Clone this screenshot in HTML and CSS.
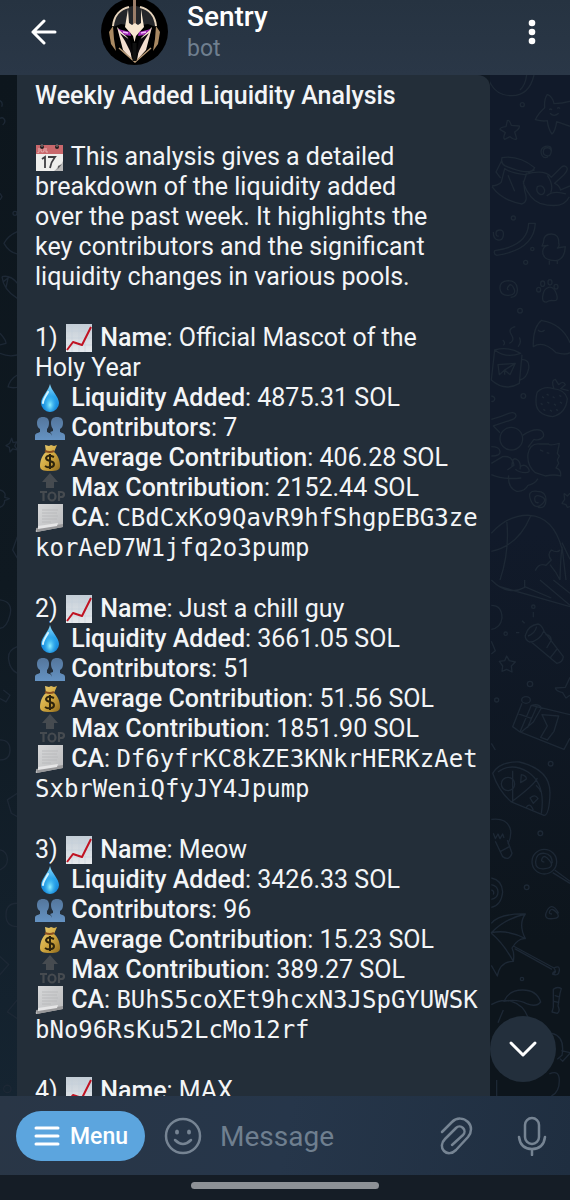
FILE: index.html
```html
<!DOCTYPE html>
<html lang="en">
<head>
    <meta charset="UTF-8">
    <meta name="viewport" content="width=device-width, initial-scale=1.0">
    <title>Sentry</title>
    <link rel="stylesheet" href="styles.css">
</head>
<body>
    <!-- Emoji shapes, reused in the message -->
    <svg class="defs" aria-hidden="true">
        <defs>
            <linearGradient id="dropFill" x1="0" y1="0" x2="0" y2="1">
                <stop offset="0" stop-color="#8fdcff"/>
                <stop offset="0.45" stop-color="#2ba4ea"/>
                <stop offset="1" stop-color="#0f7fd6"/>
            </linearGradient>
            <radialGradient id="dropGlow" cx="0.5" cy="0.75" r="0.4">
                <stop offset="0" stop-color="#8ff0ff"/>
                <stop offset="1" stop-color="#2bb0f0" stop-opacity="0"/>
            </radialGradient>
            <linearGradient id="peopleFill" x1="0" y1="0" x2="0" y2="1">
                <stop offset="0" stop-color="#54769c"/>
                <stop offset="1" stop-color="#6593c3"/>
            </linearGradient>
            <linearGradient id="bagFill" x1="0" y1="0" x2="1" y2="1">
                <stop offset="0" stop-color="#ecd27a"/>
                <stop offset="0.5" stop-color="#d3aa42"/>
                <stop offset="1" stop-color="#8f6a1c"/>
            </linearGradient>
            <linearGradient id="paperFill" x1="0" y1="0" x2="1" y2="1">
                <stop offset="0" stop-color="#d9dadb"/>
                <stop offset="1" stop-color="#b9babc"/>
            </linearGradient>
            <linearGradient id="chartFill" x1="0" y1="0" x2="0" y2="1">
                <stop offset="0" stop-color="#c3cdd6"/>
                <stop offset="1" stop-color="#e6e9ec"/>
            </linearGradient>
        </defs>
        <symbol id="calendar" viewBox="0 0 30 30">
            <path d="M1 4h27v25H1z" fill="#eeeeec"/>
            <path d="M1 3h27v9H1z" fill="#c9686c"/>
            <path d="M4 6v4q0 1-1.500 .5M6 6v3q0 1 1.500 1T9 9V6M11 6v4h2" fill="none" stroke="#e9b5b6" stroke-width="1"/>
            <circle cx="7" cy="5" r="2" fill="#241f22"/>
            <circle cx="22" cy="5" r="2" fill="#241f22"/>
            <path d="M7 5V2M22 5V2" stroke="#8b8787" stroke-width="1"/>
            <path d="M7 17l3-2v11M13 15h7q-4 5-5 11" fill="none" stroke="#3e3e42" stroke-width="1.800"/>
            <path d="M28 19q-1 4-5 5-1 3-4 5h9z" fill="#b9b9b9"/>
            <path d="M28 19q-1 4-5 5 1 3-4 5 6-2 9-10z" fill="#5a5a5c"/>
        </symbol>
        <symbol id="chart" viewBox="0 0 30 30">
            <path d="M2 1h26v28H2z" fill="url(#chartFill)"/>
            <path d="M8 1v28M15 1v28M21 1v28M2 8h26M2 15h26M2 22h26" stroke="#c3ced8" stroke-width=".5"/>
            <path d="M3 27l6-8 9 3 9-18" fill="none" stroke="#c01322" stroke-width="2" stroke-linejoin="round"/>
        </symbol>
        <symbol id="drop" viewBox="0 0 30 30">
            <path d="M15 1c1 6 9 13 9 19a9 9 0 0 1-18 0C6 14 14 7 15 1z" fill="url(#dropFill)"/>
            <path d="M15 1c1 6 9 13 9 19a9 9 0 0 1-18 0C6 14 14 7 15 1z" fill="url(#dropGlow)"/>
            <path d="M13 9c-2 4-5 7-5 11" fill="none" stroke="#d3f4ff" stroke-width="2" stroke-linecap="round"/>
        </symbol>
        <symbol id="people" viewBox="0 0 30 30">
            <g fill="url(#peopleFill)">
                <path d="M8 4c4 0 6 2 6 6 0 3-1 5-2 6v3c2 1 5 1 5 4v4H0v-4c0-3 3-3 5-4v-3c-2-1-3-3-3-6 0-4 2-6 6-6z"/>
                <path d="M22 4c4 0 6 2 6 6 0 3-1 5-3 6v3c2 1 5 1 5 4v4H17v-4c0-2-1-3-2-4l3-1v-2c-1-1-2-3-2-6 0-4 2-6 6-6z"/>
            </g>
        </symbol>
        <symbol id="bag" viewBox="0 0 30 30">
            <path d="M10 2l4 1 2-1 3 1 3-1-3 7c4 3 6 9 6 14 0 4-3 5-10 5S5 27 5 23c0-5 2-11 6-14z" fill="url(#bagFill)"/>
            <path d="M10 8q5 2 9 0" fill="none" stroke="#8a4f20" stroke-width="2"/>
            <path d="M19 14q-7-3-8 1c0 4 8 2 8 6 0 4-6 4-9 2M15 11v15" fill="none" stroke="#2d240d" stroke-width="2"/>
        </symbol>
        <symbol id="top" viewBox="0 0 30 30">
            <path d="M15 0l8 9h-4v6h-8V9H7z" fill="#464b50"/>
            <path d="M5 19h7M8.500 19v9M24 28v-9h2q3 0 3 2.500T26 24h-2" fill="none" stroke="#464b50" stroke-width="2.200"/>
            <ellipse cx="17" cy="23.500" rx="3.500" ry="4" fill="none" stroke="#464b50" stroke-width="2.200"/>
        </symbol>
        <symbol id="page" viewBox="0 0 30 30">
            <path d="M3 1h25v23L1 29q-1-3 2-4z" fill="url(#paperFill)"/>
            <path d="M7 7h16M7 10h15M7 13h16M7 16h15M7 19h9" stroke="#b9babc" stroke-width="1"/>
            <path d="M1 25l27-4v3L2 29z" fill="#99999b"/>
            <path d="M3 23l20-3-1 3-19 3z" fill="#e5e5e6"/>
        </symbol>
    </svg>

    <header class="header">
        <button class="icon-button back" aria-label="Back">
            <svg width="28" height="26" viewBox="0 0 28 26" fill="none" stroke="#fff" stroke-width="3" stroke-linecap="round" stroke-linejoin="round">
                <path d="M25 13H3M14 2L3 13l11 11"/>
            </svg>
        </button>
        <svg class="avatar" viewBox="0 0 67 67" role="img" aria-label="Sentry avatar">
            <circle cx="33.500" cy="33.500" r="33.500" fill="#000"/>
            <path d="M12 29C12 15 20 10 32 8v20L20 26zM55 29C55 15 47 10 35 8v20l12-2z" fill="#24262a"/>
            <path d="M12 28c1-10 7-17 16-19M55 28c-1-10-7-17-16-19" fill="none" stroke="#e6d3bb" stroke-width="2"/>
            <path d="M33.500 2v25" stroke="#9a7d69" stroke-width="3"/>
            <path d="M27 11l-3 18 8 9 1.500 6 1.500-6 8-9-3-18 0 14-3 2-3-2-3 2-3-2z" fill="#f7e6d0"/>
            <path d="M16 29l11 11 4 22-9-10zM51 29L40 40l-4 22 9-10z" fill="#f4dfd0"/>
            <path d="M19 35l10 7 3 17-8-16zM48 35l-10 7-3 17 8-16z" fill="#0b090c"/>
            <path d="M17 31l12 3 1 4-6-1zM50 31l-12 3-1 4 6-1z" fill="#a02ab5"/>
            <path d="M22 34l5 1M45 34l-5 1" stroke="#f4b9ff" stroke-width="1.500"/>
            <path d="M12 28l-4 6 2 12 5 7-2-12zM55 28l4 6-2 12-5 7 2-12z" fill="#a98962"/>
            <path d="M18 50l16 14 16-14" fill="none" stroke="#b89a76" stroke-width="1.500"/>
            <path d="M33.500 45v18" stroke="#111" stroke-width="4"/>
        </svg>
        <div class="peer">
            <h1>Sentry</h1>
            <p>bot</p>
        </div>
        <button class="icon-button more" aria-label="More options">
            <svg width="8" height="28" viewBox="0 0 8 28" fill="#fff">
                <circle cx="4" cy="5" r="3.300"/>
                <circle cx="4" cy="14" r="3.300"/>
                <circle cx="4" cy="23" r="3.300"/>
            </svg>
        </button>
    </header>

    <main class="chat">
        <!-- Wallpaper doodles -->
        <svg class="wallpaper left" viewBox="0 75 17 1021" preserveAspectRatio="xMinYMin slice" aria-hidden="true">
            <g transform="translate(0 60) scale(.3333)">
                <path d="M0 122q10 6 5 18M0 175q8-5 13 3t-5 17M0 400l6 10-6 10M52 515q-28 12-40 35 14 26 40 32"/>
                <circle cx="45" cy="460" r="6"/>
                <path d="M6 650q26-6 46 20M6 650q4 40 46 65M10 665l18-14M24 655l-6 28M0 820q18 20 18 30l-18 5M0 880q26 12 52 5M52 945q-22 12-28 36 14 4 28 1M35 1135l4 13 11-2-6 12 8 12-14-3-8 9-2-14-10-5 11-7zM0 1290q20 6 14 22l14 4-14 6q0 16-14 20M52 1430l-14 40 14 25"/>
                <path d="M0 1620q40 5 30 45T0 1705M52 1760q-30 10-26 40t26 40M10 1890l20 16-12 20-18-10M0 2040q30 0 30 30t-30 30M52 2200l-30 20 12 40 18 10M0 2370q20 4 22 26T0 2430M52 2530q-34 0-34 35t34 35M0 2690l26 24-26 30M52 2820l-30 36 30 20"/>
                <circle cx="22" cy="3087" r="11"/>
            </g>
        </svg>
        <svg class="wallpaper right" viewBox="490 75 80 1021" preserveAspectRatio="xMaxYMin slice" aria-hidden="true">
            <g transform="translate(480 60) scale(.3333)">
                <!-- stars, sleeping cat, scarf, duckling, paw -->
                <path d="M22 45q15 60 70 62t70-62M120 90q16-14 20-45"/>
                <circle cx="127" cy="134" r="6"/>
                <path d="M202 103q16 6 20 28 26 0 50-8M202 103q-10 14-8 40-20 18-28 36 22 6 36 3 2 24 14 40 10-8 14-37l40 14M208 150q3-6 8 0M232 146q3-6 8 0M210 160q12 12 26 0"/>
                <path d="M82 182q6-4 12 14l24 2q2 8-14 18l6 20q-6 6-20-6l-16 8q-6-4 2-20l-16-10q0-6 18-8z"/>
                <path d="M214 275a12 12 0 1 0-14 12q12 4 14-14t-18-14q-16 6-12 22t20 10M66 293q50-8 98 30-6 14-30 12t-60-18q-12-8-8-24zM66 300l-18 36q8 12 14 18M164 330l-20 8M36 378q20-2 28-12l10-40q20 14 60 18 60-18 80 8l30-30q10-8 16 0t-8 22l-28 26q14 6 18 20l28-12M36 380q30 42 90 52 20-6 8-40l-4-30M84 346l20 48M140 340l-10 30q20 50 50 60 70 20 88-20M202 346q20 30 10 52M172 380q16-8 22 10 0 14-12 14-16-8-10-24zM200 408q20-18 58-6"/>
                <circle cx="100" cy="474" r="6"/>
                <path d="M56 528q-8 2-8-8t12-10 10 16-16 14-14-24M146 490h20q-4 80-116 96-10-4-6-14 100-14 102-82z"/>
                <path d="M190 548q0-26 24-26t22 28q4 8-4 14l24-4q-2 40-30 42-38 0-38-28 2-16 16-18l-18 2zM208 602v12M232 602v10"/>
                <circle cx="157" cy="567" r="5"/><circle cx="137" cy="607" r="6"/>
                <path d="M86 690q-8-2 0-12t16 8-16 20-26-20 24-24q26 0 28 24t-20 26M188 710q2-24 18-28t24 22q6 20-10 18-12-2-20 4-14 2-12-16z"/>
                <ellipse cx="176" cy="689" rx="6" ry="7"/><ellipse cx="188" cy="671" rx="6" ry="8"/><ellipse cx="210" cy="667" rx="6" ry="8"/><ellipse cx="228" cy="680" rx="6" ry="7"/>
                <circle cx="120" cy="752" r="7"/>
            </g>
            <g transform="translate(480 320) scale(.3333)">
                <!-- mug, strawberry, cats, parachute -->
                <path d="M44 90q40-12 78 10-44 16-78-10zM44 90l-10 90q40 36 84 10l8-86M124 118q26 0 22 28-6 30-26 34M54 134l52-4-16 34-16-14-16 14zM106 130l-32 20v14M70 76q8-8-2-16M88 70q18-8 6-26t12-24M114 80q12-12 4-28M186 0q-28 20-26 80 30-20 68 18 30 8 42 0M186 2q60 10 84 66M174 30q10 10 20 0"/>
                <circle cx="130" cy="228" r="7"/><path d="M34 228q12 2 10 10t-10 6"/>
                <path d="M172 216q20-20 48-10 36 4 42 30-4 44-44 54-50-6-50-44 0-20 4-30zM222 206q-10-26 4-28l10 16q14-14 20 0l-14 12 24 6M186 230l6 4M200 222l6 4M218 230l6 4M238 226l6 4M182 250l6 4M202 246l6 4M222 252l6 4M240 246l6 4M190 268l6 4M210 270l6 4M228 268l6 4"/>
                <circle cx="94" cy="356" r="34"/>
                <path d="M34 298q30-8 52-18 20-6 22 6t-28 18l-40 14 20 20M128 346q30-20 50-16 16 6 12 20-10 14-28 8l-18 24M34 380q24 0 26 14t-26 14M34 430l34-20q30-4 34 26l-20 14M96 440q0-30 14-22t10 30M120 440q14-10 24 4t-8 14-30-10M180 372q-30-4-36 30-4 34 22 56l30 10q26-6 46 0 2-20-14-24l8-14-4-10 6-12-6-8 6-30q-30 8-32 2zM86 466q-4 36 24 48 24 2 34-18 20-4 30-20M34 464q34 16 90 10M180 390l10 4M200 398l8 2"/>
                <path d="M176 548q-12 2-12-12t20-6 0 24-32-14 20-26q26 0 26 26t-24 22M252 520l10 8 8-8M252 520l2 18-8 12 12 4 4 8 8-2M34 640q50-56 114-54 72 4 98 100-4 20-6 94M34 694q80-16 118-106M80 600q10 90-20 180M246 668l24 50M246 680l12 100M166 752q10-24 32-16l16-16q-14-16 0-30 18 10 26 0M210 734q20 24 30 46"/>
            </g>
            <g transform="translate(480 580) scale(.3333)">
                <!-- flashlight, travel card, pizza, bulb -->
                <path d="M34 0q50 50 100 22V0M60 20l210 60M134 20l80 34M180 0l90 76M220 0l50 40"/>
                <circle cx="160" cy="80" r="5"/><path d="M160 96v16M126 122l8 8M108 158h10M34 76q32 0 32 38-4 30-32 34M34 184l12 28-12 10"/>
                <circle cx="77" cy="161" r="5"/>
                <path d="M136 166q8-30 38-34 10 2 18 20-14 32-44 34-14-8-12-20zM144 168q20-6 26-28M192 154l58 76q-2 18-20 20l-76-64M196 164q16 0 18 16l-14 24M232 206l-20 26M80 228l8 14 18 4-12 12 2 18-16-8-14 6 2-16-10-14 16-2zM270 292l-14 30-30 2q2 10 22 14l10 16 12-8"/>
                <circle cx="150" cy="312" r="8"/><circle cx="50" cy="360" r="6"/><ellipse cx="138" cy="360" rx="13" ry="10"/>
                <path d="M126 370l-28 70 22 16M120 456l34-80 116 28M120 456l132 52 18-34M112 400l44 16M154 376q24-6 30 8l-24 42-36 30M170 380l-28 64M186 404l50 4-14 46-20 26-20-8 20-34z"/>
                <path d="M38 580q20-36 80-34 92 22 92 92-2 68-18 68L94 666q-38-32-56-86zM54 576q40-30 90 0 54 36 40 124M94 666q70-52 78-72M98 572v94M124 584q18 4 14 14l-16 10zM168 616q12 10 14 20M150 654q16-14 24 2l-14 14zM138 684q10-20 22 6"/>
                <circle cx="84" cy="612" r="20"/><circle cx="212" cy="551" r="7"/><circle cx="181" cy="760" r="7"/>
                <path d="M34 718q50-6 58 34 2 20-8 40M40 760l6 16 8-14 6 14 8-14 4 12M34 490l12 20"/>
            </g>
            <g transform="translate(480 840) scale(.3333)">
                <!-- lollipop, umbrella, candy, whale -->
                <path d="M46 4l22 46q20 14 28-10L82 0M62 34l26-14"/>
                <circle cx="193" cy="65" r="37"/>
                <path d="M193 66q-12 0-6-12t22 8-14 24-28-22 26-24 24 30M224 90l46 34M218 98l52 32M34 114q32 6 34 42-4 40-34 46M34 134q20 4 20 22t-20 22M34 150q10 2 6 14M216 222q-12 0-6-10t20 6-12 18-20-16 16-20 22 20"/>
                <circle cx="140" cy="142" r="7"/><circle cx="126" cy="417" r="5"/>
                <path d="M34 250q24-30 102-28-22 30 0 74-22-2-40 28 8 16 4 40-40 0-48 44l-18-32M136 222q-60 14-102 56 50-10 102 18M34 280q36 30 66 84M100 318l122 66q10 16-4 16l6-6M104 326l112 62M222 384q18-10 16 8t-22 10M220 448q12-10 24-2l-4 14-6 38q8 16-2 22l-16-4 4-14zM224 466l16 6M222 484l16 4M72 484q14-34 56-34t54 36q-12 16-40 6-30-16-70-8zM34 494q30-18 60-10 36 10 50 48M70 510l-16 38M216 580q40 10 30 66l-14 12M244 632l26 6M240 656l8 8 22-24M208 702q30-14 30 20t-24 46M50 720v48"/>
            </g>
        </svg>

        <article class="message">
            <p><b>Weekly Added Liquidity Analysis</b></p>
            <p class="intro"><svg class="emoji"><use href="#calendar"/></svg> This analysis gives a detailed breakdown of the liquidity added over the past week. It highlights the key contributors and the significant liquidity changes in various pools.</p>
            <p>
                1) <svg class="emoji"><use href="#chart"/></svg> <b>Name</b>: Official Mascot of the<br>
                Holy Year<br>
                <svg class="emoji"><use href="#drop"/></svg> <b>Liquidity Added</b>: 4875.31 SOL<br>
                <svg class="emoji"><use href="#people"/></svg> <b>Contributors</b>: 7<br>
                <svg class="emoji"><use href="#bag"/></svg> <b>Average Contribution</b>: 406.28 SOL<br>
                <svg class="emoji"><use href="#top"/></svg> <b>Max Contribution</b>: 2152.44 SOL<br>
                <svg class="emoji"><use href="#page"/></svg> <b>CA</b>: <code>CBdCxKo9QavR9hfShgpEBG3zekorAeD7W1jfq2o3pump</code>
            </p>
            <p>
                2) <svg class="emoji"><use href="#chart"/></svg> <b>Name</b>: Just a chill guy<br>
                <svg class="emoji"><use href="#drop"/></svg> <b>Liquidity Added</b>: 3661.05 SOL<br>
                <svg class="emoji"><use href="#people"/></svg> <b>Contributors</b>: 51<br>
                <svg class="emoji"><use href="#bag"/></svg> <b>Average Contribution</b>: 51.56 SOL<br>
                <svg class="emoji"><use href="#top"/></svg> <b>Max Contribution</b>: 1851.90 SOL<br>
                <svg class="emoji"><use href="#page"/></svg> <b>CA</b>: <code>Df6yfrKC8kZE3KNkrHERKzAetSxbrWeniQfyJY4Jpump</code>
            </p>
            <p>
                3) <svg class="emoji"><use href="#chart"/></svg> <b>Name</b>: Meow<br>
                <svg class="emoji"><use href="#drop"/></svg> <b>Liquidity Added</b>: 3426.33 SOL<br>
                <svg class="emoji"><use href="#people"/></svg> <b>Contributors</b>: 96<br>
                <svg class="emoji"><use href="#bag"/></svg> <b>Average Contribution</b>: 15.23 SOL<br>
                <svg class="emoji"><use href="#top"/></svg> <b>Max Contribution</b>: 389.27 SOL<br>
                <svg class="emoji"><use href="#page"/></svg> <b>CA</b>: <code>BUhS5coXEt9hcxN3JSpGYUWSKbNo96RsKu52LcMo12rf</code>
            </p>
            <p>4) <svg class="emoji"><use href="#chart"/></svg> <b>Name</b>: MAX</p>
        </article>

        <button class="scroll-down" aria-label="Scroll to bottom">
            <svg width="30" height="18" viewBox="0 0 30 18" fill="none" stroke="#fff" stroke-width="3" stroke-linecap="round" stroke-linejoin="round">
                <path d="M3 3l12 12L27 3"/>
            </svg>
        </button>
    </main>

    <footer class="composer">
        <button class="menu">
            <svg width="26" height="20" viewBox="0 0 26 20" stroke="#fff" stroke-width="3" stroke-linecap="round">
                <path d="M2 2h22M2 10h22M2 18h22"/>
            </svg>
            Menu
        </button>
        <button class="icon-button" aria-label="Emoji">
            <svg width="38" height="38" viewBox="0 0 38 38" fill="none" stroke="#768493" stroke-width="2.500" stroke-linecap="round">
                <circle cx="19" cy="19" r="17"/>
                <path d="M11 23q8 8 16 0"/>
                <ellipse cx="13" cy="15" rx="2" ry="2.500" fill="#768493" stroke="none"/>
                <ellipse cx="25" cy="15" rx="2" ry="2.500" fill="#768493" stroke="none"/>
            </svg>
        </button>
        <input type="text" placeholder="Message" aria-label="Message">
        <button class="icon-button" aria-label="Attach">
            <svg width="34" height="38" viewBox="0 0 34 38" fill="none" stroke="#768493" stroke-width="2.500" stroke-linecap="round">
                <path d="M3 15L13 5C18 0 25 1 29 5s4 10 0 15L17 33c-4 4-9 4-12 1s-3-8 1-12L17 11c2-2 5-2 7 0s2 5 0 7L13 28"/>
            </svg>
        </button>
        <button class="icon-button" aria-label="Record voice message">
            <svg width="30" height="40" viewBox="0 0 30 40" fill="none" stroke="#768493" stroke-width="2.500" stroke-linecap="round">
                <rect x="8" y="2" width="14" height="26" rx="7"/>
                <path d="M2 21c1 8 6 12 13 12s12-4 13-12M15 33v6"/>
            </svg>
        </button>
    </footer>
    <div class="nav-bar"><span></span></div>
</body>
</html>
```
FILE: styles.css
```css
* {
    box-sizing: border-box;
}
body {
    display: flex;
    flex-direction: column;
    height: 100vh;
    margin: 0;
    font-family: Roboto, sans-serif;
    font-size: 25px;
    line-height: 30px;
    color: #f3f5f7;
    background: #151d26;
    overflow: hidden;
}
h1, p {
    margin: 0;
}
button {
    padding: 0;
    border: none;
    background: none;
    font-family: inherit;
    cursor: pointer;
}
.defs {
    position: absolute;
    width: 0;
    height: 0;
}
.icon-button {
    display: flex;
    flex: none;
}

/* Header */
.header {
    display: flex;
    flex: none;
    align-items: center;
    height: 75px;
    padding: 0 34px 12px 30px;
    background: linear-gradient(#263341, #2a3747);
}
.avatar {
    flex: none;
    width: 67px;
    height: 67px;
    margin: 0 19px 0 43px;
}
.peer {
    flex: 1;
    padding-top: 3px;
    line-height: 32px;
}
.peer h1 {
    font-size: 28px;
    font-weight: 500;
    color: #fff;
}
.peer p {
    font-size: 23px;
    color: #6f7f8f;
}

/* Chat */
.chat {
    position: relative;
    flex: 1;
    min-height: 0;
    overflow: hidden;
    background: #101923;
}
.wallpaper {
    position: absolute;
    top: 0;
    height: 100%;
    fill: none;
    stroke: #1d2835;
    stroke-width: 4px;
    stroke-linejoin: round;
}
.wallpaper.left {
    left: 0;
    width: 17px;
    background: linear-gradient(#0d161d, #0f1921 50%, #152431);
}
.wallpaper.right {
    right: 0;
    width: 80px;
    background: linear-gradient(#111a2a 45%, #0d151c 85%);
}
.message {
    position: relative;
    margin: 0 80px 0 17px;
    padding: 6px 12px 0 18px;
    border-top-right-radius: 12px;
    background: #232e39;
}
.message p {
    margin-bottom: 31px;
}
.message .intro {
    max-width: 404px;
}
.message b {
    font-weight: 500;
}
.message code {
    font-family: "DejaVu Sans Mono", monospace;
    font-size: 24px;
    line-height: 1;
    word-break: break-all;
}
.emoji {
    width: 30px;
    height: 30px;
    margin: -2px 0;
    vertical-align: -5px;
}
.scroll-down {
    position: absolute;
    right: 14px;
    bottom: 14px;
    display: flex;
    align-items: center;
    justify-content: center;
    width: 66px;
    height: 66px;
    border-radius: 50%;
    background: #232f3c;
}

/* Message box */
.composer {
    display: flex;
    flex: none;
    align-items: center;
    height: 79px;
    padding: 1px 23px 0 16px;
    background: linear-gradient(100deg, #293646, #26364a 50%, #1f2e40);
}
.menu {
    display: flex;
    flex: none;
    align-items: center;
    gap: 10px;
    height: 50px;
    margin-right: 19px;
    padding: 0 17px 0 18px;
    border-radius: 25px;
    font-size: 23px;
    font-weight: 500;
    color: #fff;
    background: #5ca5de;
}
.composer input {
    flex: 1;
    min-width: 0;
    margin-left: 18px;
    padding: 0;
    border: none;
    outline: none;
    font-family: inherit;
    font-size: 28px;
    color: #fff;
    background: none;
}
.composer input::placeholder {
    color: #6f7f8f;
    opacity: 1;
}
.composer input ~ .icon-button {
    margin-left: 18px;
}
.composer .icon-button:last-child {
    margin-left: 44px;
}

/* Gesture bar */
.nav-bar {
    display: flex;
    flex: none;
    justify-content: center;
    height: 25px;
    padding-top: 7px;
}
.nav-bar span {
    width: 33%;
    height: 7px;
    border-radius: 4px;
    background: #8d9196;
}
```
